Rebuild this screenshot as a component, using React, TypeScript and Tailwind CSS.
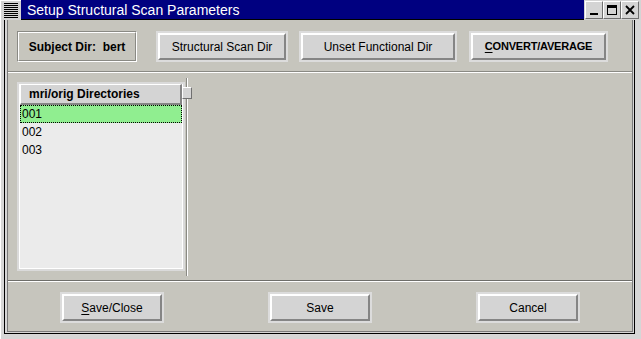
import React from 'react';

const dirs = ['001', '002', '003'];

// raised Motif-like push button with a light focus ring
const PushButton: React.FC<{ width: string; bold?: boolean; children: React.ReactNode }> = ({ width, bold, children }) => (
  <div className={`${width} h-[31px] border-2 border-[#dcdcdc] flex`}>
    <div
      className={`flex-1 flex items-center justify-center bg-[#d4d4d4] border-t-2 border-l-2 border-white border-b-2 border-r-2 border-b-[#858585] border-r-[#858585] text-black ${
        bold ? 'font-bold text-[11px] tracking-[-0.2px]' : 'text-[12px]'
      }`}
    >
      {children}
    </div>
  </div>
);

const TitleButton: React.FC<{ children: React.ReactNode }> = ({ children }) => (
  <div className="w-[18px] h-[18px] bg-[#d4d4d4] border border-t-white border-l-white border-b-[#707070] border-r-[#707070] flex items-center justify-center">
    {children}
  </div>
);

const App: React.FC = () => {
  return (
    <div className="w-[641px] h-[339px] bg-[#d6d6d6] flex flex-col font-['Liberation_Sans',Arial,sans-serif] overflow-hidden">
      {/* Title bar */}
      <div className="h-[20px] flex shrink-0">
        <div className="w-[21px] h-[20px] bg-[#d4d4d4] border-l border-t border-white flex items-center justify-center">
          <svg width="14" height="15" viewBox="0 0 14 15">
            {[0, 2, 4, 6, 8, 10, 12, 14].map(y => (
              <rect key={y} x="0" y={y} width="14" height="1" fill="#000" />
            ))}
          </svg>
        </div>
        <div className="flex-1 bg-[#000080] border-b border-black flex items-center pl-[6px] text-white text-[14px] leading-none">
          Setup Structural Scan Parameters
        </div>
        <div className="flex items-start gap-0 bg-[#d4d4d4] pt-px pr-[2px] pl-px">
          <TitleButton>
            <svg width="12" height="12" viewBox="0 0 12 12">
              <rect x="2" y="9" width="8" height="2" fill="#000" />
            </svg>
          </TitleButton>
          <TitleButton>
            <svg width="12" height="12" viewBox="0 0 12 12">
              <rect x="1.5" y="1.5" width="9" height="9" fill="none" stroke="#000" />
              <rect x="1" y="1" width="10" height="3" fill="#000" />
            </svg>
          </TitleButton>
          <TitleButton>
            <svg width="12" height="12" viewBox="0 0 12 12">
              <path d="M2 2 L10 10 M10 2 L2 10" stroke="#000" strokeWidth="1.8" />
            </svg>
          </TitleButton>
        </div>
      </div>

      {/* Window frame */}
      <div className="flex-1 flex pl-[3px] pr-[6px] pb-[5px] border-l border-white">
        <div className="flex-1 flex border-l border-r border-b border-black">
          <div className="flex-1 flex pl-[2px] pr-px pb-px">
            <div className="flex-1 flex flex-col bg-[#c6c5bd] border-l border-r border-b border-[#7a7a7a]">
              {/* Top row */}
              <div className="h-[52px] flex items-start pt-[11px] border-b border-b-[#8a8a84] shrink-0">
                <div className="ml-[9px] w-[120px] h-[31px] border border-t-[#8a8a84] border-l-[#8a8a84] border-b-white border-r-white flex">
                  <div className="flex-1 border border-t-white border-l-white border-b-[#8a8a84] border-r-[#8a8a84] flex items-center justify-center text-[12px] font-bold text-black">
                    Subject Dir:&nbsp;&nbsp;bert
                  </div>
                </div>
                <div className="ml-[19px]">
                  <PushButton width="w-[132px]">Structural Scan Dir</PushButton>
                </div>
                <div className="ml-[11px]">
                  <PushButton width="w-[158px]">Unset Functional Dir</PushButton>
                </div>
                <div className="ml-[12px]">
                  <PushButton width="w-[139px]" bold>
                    <span>
                      <span className="underline underline-offset-2">C</span>ONVERT/AVERAGE
                    </span>
                  </PushButton>
                </div>
              </div>

              {/* Middle area */}
              <div className="flex-1 flex border-t border-white border-b border-b-[#6e6e6a]">
                <div className="ml-[9px] mt-[9px] w-[168px] h-[189px] border-2 border-[#dadada] flex">
                  <div className="flex-1 flex flex-col border-l border-r border-b border-white bg-[#ebebeb]">
                    <div className="h-[21px] bg-[#d4d4d4] border-t border-l border-white border-b-2 border-r-2 border-b-[#858585] border-r-[#858585] flex items-center pl-[8px] text-[12px] font-bold text-black shrink-0">
                      mri/orig Directories
                    </div>
                    {dirs.map((d, i) => (
                      <div
                        key={d}
                        className={`h-[18px] flex items-center pl-px text-[12px] text-black ${
                          i === 0 ? 'bg-[#90ee90] border border-dotted border-black' : 'border border-transparent'
                        }`}
                      >
                        {d}
                      </div>
                    ))}
                  </div>
                </div>
                {/* sash */}
                <div className="relative w-[12px] mt-[5px] mb-[4px]">
                  <div className="ml-[1px] w-[2px] h-full bg-white border-l border-[#8a8a84]" />
                  <div className="absolute left-[-3px] top-[9px] w-[10px] h-[12px] bg-[#d4d4d4] border border-t-white border-l-white border-b-[#707070] border-r-[#707070]" />
                </div>
              </div>

              {/* Bottom buttons */}
              <div className="h-[50px] grid grid-cols-3 items-start pt-[10px] border-t border-white shrink-0">
                <div className="flex justify-center">
                  <PushButton width="w-[104px]">
                    <span>
                      <span className="underline underline-offset-2">S</span>ave/Close
                    </span>
                  </PushButton>
                </div>
                <div className="flex justify-center">
                  <PushButton width="w-[104px]">Save</PushButton>
                </div>
                <div className="flex justify-center">
                  <PushButton width="w-[104px]">Cancel</PushButton>
                </div>
              </div>
            </div>
          </div>
        </div>
      </div>
    </div>
  );
};

export default App;
